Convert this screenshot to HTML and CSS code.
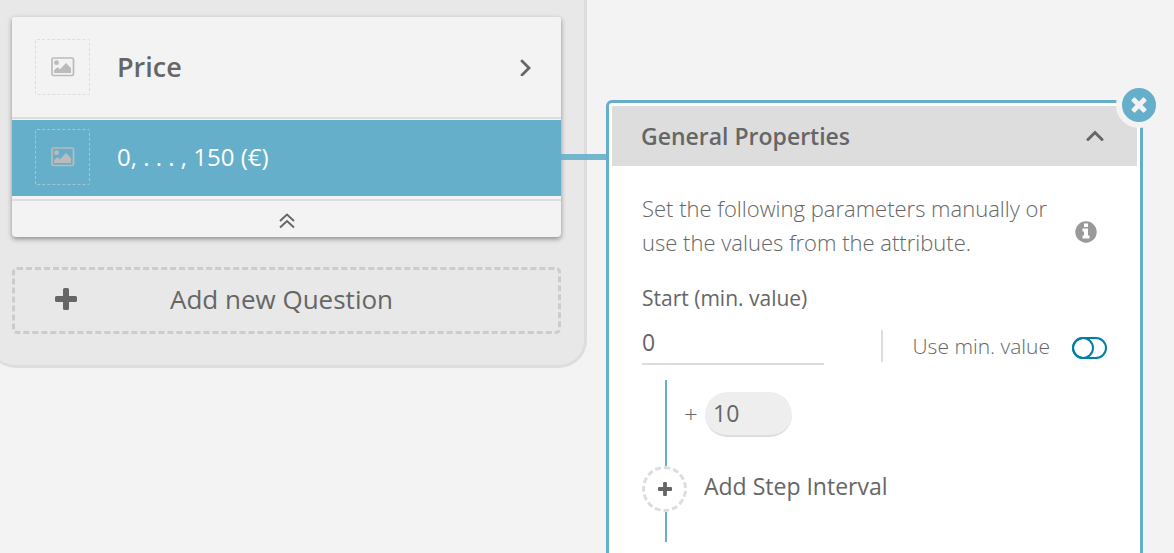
FILE: index.html
```html
<!DOCTYPE html>
<html lang="en">
<head>
<meta charset="utf-8">
<meta name="viewport" content="width=device-width, initial-scale=1">
<title>Question editor</title>
<link rel="stylesheet" href="styles.css">
</head>
<body>
<svg class="sprite" aria-hidden="true">
  <symbol id="image" viewBox="0 0 24 20">
    <rect x="1" y="1" width="21.500" height="17.500" rx="1.5" fill="none" stroke="currentColor" stroke-width="1.7"/>
    <circle cx="5.5" cy="5.7" r="2.4" fill="currentColor"/>
    <path d="M3 16v-2.700l3.500-3 2.500 2 6-6.300 5 5V16z" fill="currentColor"/>
  </symbol>
  <symbol id="plus" viewBox="0 0 22 22">
    <path d="M9.500 0h3q1.500 0 1.500 1.500V8h6.500Q22 8 22 9.500v3q0 1.500-1.500 1.500H14v6.500q0 1.500-1.500 1.500h-3Q8 22 8 20.500V14H1.500Q0 14 0 12.500v-3Q0 8 1.500 8H8V1.500Q8 0 9.500 0z" fill="currentColor"/>
  </symbol>
</svg>
<main class="workspace">
  <section class="questions">
    <div class="card">
      <button class="row row-title" type="button">
        <span class="thumb"><svg class="thumb-icon"><use href="#image"/></svg></span>
        <span class="row-label">Price</span>
        <svg class="chevron-right" viewBox="0 0 12 18"><path d="M2 3l7 7-7 7" fill="none" stroke="currentColor" stroke-width="2.800" stroke-linecap="round"/></svg>
      </button>
      <button class="row row-active" type="button">
        <span class="thumb"><svg class="thumb-icon"><use href="#image"/></svg></span>
        <span class="row-label">0, . . . , 150 (€)</span>
      </button>
      <button class="collapse" type="button" aria-label="Collapse question">
        <svg class="double-up" viewBox="0 0 16 16"><path d="M1 8l7-6.500L15 8M1 14.500L8 8l7 6.500" fill="none" stroke="currentColor" stroke-width="1.900"/></svg>
      </button>
    </div>
    <button class="add-question" type="button">
      <svg class="plus-large"><use href="#plus"/></svg>
      <span>Add new Question</span>
    </button>
  </section>

  <section class="properties">
    <button class="close" type="button" aria-label="Close properties">
      <svg class="close-icon" viewBox="0 0 22 22"><use href="#plus" transform="rotate(45 11 11)"/></svg>
    </button>
    <button class="section-header" type="button">
      <span>General Properties</span>
      <svg class="chevron-up" viewBox="0 0 18 12"><path d="M2 9.500l7-7 7 7" fill="none" stroke="currentColor" stroke-width="3" stroke-linecap="round"/></svg>
    </button>
    <div class="section-body">
      <div class="hint">
        <p class="hint-text">Set the following parameters manually or use the values from the attribute.</p>
        <svg class="info" viewBox="0 0 22 22"><circle cx="11" cy="11" r="10.700" fill="#999"/><path d="M9 2.500h4v3.500H9zM7.500 7.500h5.500v7h1.500v3h-7v-3H9v-4H7.500z" fill="#fff"/></svg>
      </div>
      <label class="field-label" for="start">Start (min. value)</label>
      <div class="start-row">
        <input class="start-input" id="start" type="text" value="0">
        <div class="min-option">
          <label class="toggle-label" for="use-min">Use min. value</label>
          <input class="toggle" id="use-min" type="checkbox" role="switch">
        </div>
      </div>
      <div class="steps">
        <div class="step">
          <label class="step-sign" for="step">+</label>
          <input class="step-input" id="step" type="text" value="10">
        </div>
        <button class="add-step" type="button">
          <span class="add-step-ring"><svg class="plus-small"><use href="#plus"/></svg></span>
          <span class="add-step-text">Add Step Interval</span>
        </button>
        <div class="rail-end"></div>
      </div>
    </div>
  </section>
</main>
</body>
</html>
```
FILE: styles.css
```css
*, *::before, *::after { box-sizing: border-box; }

body {
  margin: 0;
  background: #f3f3f3;
  color: #666;
  font-family: "Open Sans", "Noto Sans", sans-serif;
  font-size: 22px;
  overflow: hidden;
}

button, input {
  margin: 0;
  padding: 0;
  border: 0;
  background: none;
  color: inherit;
  font: inherit;
  text-align: left;
}

button { cursor: pointer; }
svg { display: block; flex: none; }
.sprite { position: absolute; width: 0; height: 0; }

.workspace {
  display: grid;
  grid-template-columns: minmax(0, 587fr) minmax(0, 537fr);
  column-gap: 19px;
  min-height: 100vh;
  padding-right: 31px;
}

/* Question list */
.questions {
  align-self: start;
  display: flex;
  flex-direction: column;
  gap: 30px;
  margin-left: -12px;
  padding: 17px 23px 31px 24px;
  background: #e8e8e8;
  border: solid #ddd;
  border-width: 0 3px 3px 0;
  border-radius: 0 0 28px 28px;
}

.card {
  background: #f3f3f3;
  border-radius: 2px 2px 4px 4px;
  box-shadow: 0 2px 5px rgba(0, 0, 0, 0.4);
}

.row {
  position: relative;
  display: flex;
  align-items: center;
  width: 100%;
  padding: 0 29px 0 23px;
}

.row-title {
  height: 102px;
  border-bottom: 2px solid #ddd;
  font-size: 27px;
  font-weight: 600;
}

.row-active {
  height: 76px;
  margin: 1px 0 3px;
  padding-bottom: 3px;
  background: #66afca;
  color: #fff;
  font-size: 24px;
}

.row-active::after {
  content: "";
  position: absolute;
  left: 100%;
  top: 34px;
  width: 46px;
  height: 6px;
  background: #66afca;
  opacity: 0.9;
}

.thumb {
  display: grid;
  place-items: center;
  width: 55px;
  height: 56px;
  margin-right: 27px;
  border: 1px dashed #ddd;
  border-radius: 2px;
  color: #bbb;
}

.row-active .thumb { border-color: rgba(221, 221, 221, 0.5); }
.thumb-icon { width: 24px; height: 20px; }
.row-label { flex: 1; line-height: 32px; }
.chevron-right { width: 12px; height: 18px; }

.collapse {
  display: grid;
  place-items: center;
  width: 100%;
  height: 38px;
  padding-top: 4px;
  border-top: 2px solid #ddd;
}

.double-up { width: 16px; height: 16px; }

.add-question {
  display: flex;
  align-items: center;
  gap: 93px;
  height: 67px;
  padding: 0 0 3px 40px;
  border: 3px dashed #ccc;
  border-radius: 5px;
  font-size: 26px;
}

.plus-large { width: 22px; height: 22px; }

/* Properties panel */
.properties {
  position: relative;
  margin-top: 100px;
  padding: 3px;
  background: #fff;
  border: 3px solid #66afca;
  border-bottom: 0;
  border-radius: 6px 6px 0 0;
}

.close {
  position: absolute;
  top: -21px;
  right: -22px;
  display: grid;
  place-items: center;
  width: 46px;
  height: 46px;
  border: 6px solid #f3f3f3;
  border-radius: 50%;
  background: #66afca;
  color: #f3f3f3;
}

.close-icon { width: 18px; height: 18px; overflow: visible; }

.section-header {
  display: flex;
  align-items: center;
  justify-content: space-between;
  width: 100%;
  height: 60px;
  padding: 0 33px 0 29px;
  background: #ddd;
  font-size: 23px;
  font-weight: 600;
}

.chevron-up { width: 18px; height: 12px; }
.section-body { padding: 25px 30px 0; }

.hint {
  display: flex;
  align-items: center;
  justify-content: space-between;
  padding-right: 10px;
  font-weight: 300;
  line-height: 34px;
}

.hint-text { flex: 1; margin: 0; }
.info { width: 22px; height: 22px; margin-top: 14px; }

.field-label {
  display: block;
  margin-top: 22px;
  font-size: 21px;
  line-height: 34px;
}

.start-row {
  display: flex;
  align-items: flex-start;
  justify-content: space-between;
  height: 50px;
}

.start-input {
  width: 182px;
  height: 50px;
  padding-top: 6px;
  border-bottom: 2px solid #ddd;
  font-size: 23px;
}

.min-option {
  display: flex;
  align-items: center;
  height: 32px;
  margin-top: 15px;
  padding-left: 30px;
  border-left: 2px solid #ddd;
}

.toggle-label {
  font-size: 21px;
  font-weight: 300;
}

.toggle {
  appearance: none;
  width: 35px;
  height: 22px;
  margin: 4px 0 0 22px;
  border: 2px solid #007ea8;
  border-radius: 11px;
  cursor: pointer;
}

.toggle::before {
  content: "";
  display: block;
  width: 22px;
  height: 22px;
  margin: -2px;
  border: 2px solid #007ea8;
  border-radius: 50%;
}

.toggle:checked::before { margin-left: 11px; }

/* Step list joined by a vertical rail */
.steps { margin-top: 15px; }

.step {
  display: flex;
  align-items: flex-start;
  height: 86px;
  margin-left: 23px;
  padding: 12px 0 0 17px;
  border-left: 2px solid #66afca;
}

.step-sign {
  width: 21px;
  font-size: 24px;
  font-weight: 300;
  line-height: 44px;
}

.step-input {
  width: 87px;
  height: 45px;
  padding: 0 8px 2px;
  border-bottom: 2px solid #ddd;
  border-radius: 23px;
  background: #eee;
  font-size: 23px;
}

.add-step {
  display: flex;
  align-items: center;
  gap: 17px;
  font-size: 23px;
}

.add-step-text { padding-bottom: 6px; }

.add-step-ring {
  display: grid;
  place-items: center;
  width: 45px;
  height: 46px;
  border: 3px dashed #ddd;
  border-radius: 50%;
}

.plus-small { width: 14px; height: 14px; }

.rail-end {
  width: 2px;
  height: 30px;
  margin-left: 23px;
  background: #66afca;
}
```
